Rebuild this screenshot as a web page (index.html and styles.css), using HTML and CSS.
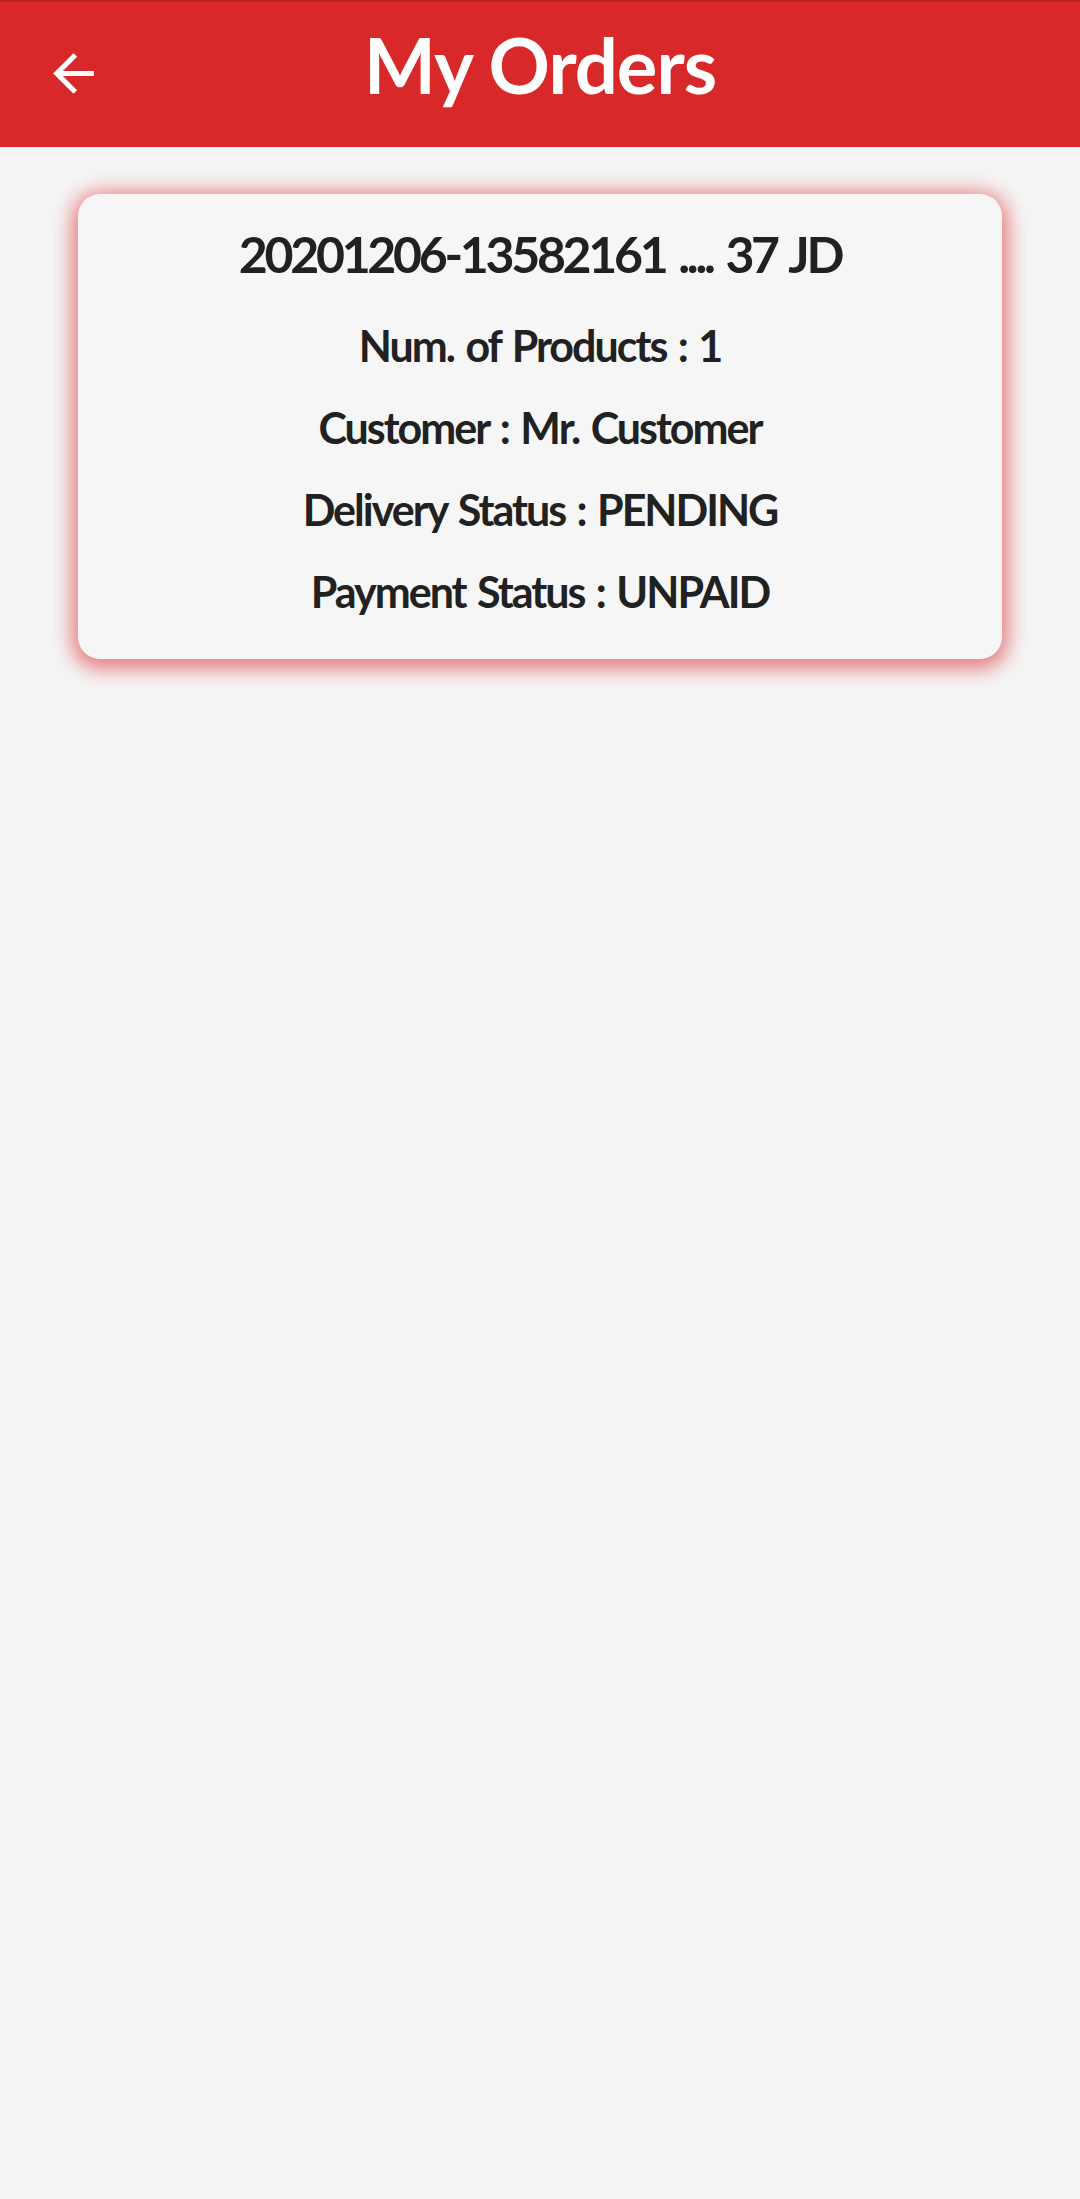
FILE: index.html
```html
<!DOCTYPE html>
<html lang="en">
<head>
    <meta charset="UTF-8">
    <meta name="viewport" content="width=device-width, initial-scale=1.0">
    <title>My Orders</title>
    <link rel="stylesheet" href="styles.css">
</head>
<body>
    <header class="toolbar">
        <button class="back-btn" aria-label="Back">
            <svg viewBox="0 0 24 24" width="61" height="61">
                <path fill="#fff" d="M20 11H7.83l5.59-5.59L12 4l-8 8 8 8 1.41-1.41L7.83 13H20v-2z"/>
            </svg>
        </button>
        <h1 class="toolbar-title">My Orders</h1>
        <div></div>
    </header>

    <main class="orders">
        <div class="order-card">
            <h2 class="order-title">20201206-13582161 .... 37 JD</h2>
            <p class="order-row">Num. of Products : 1</p>
            <p class="order-row">Customer : Mr. Customer</p>
            <p class="order-row">Delivery Status : PENDING</p>
            <p class="order-row">Payment Status : UNPAID</p>
        </div>
    </main>
</body>
</html>
```

FILE: styles.css
```css
body {
    font-family: Lato, "Open Sans", sans-serif;
    margin: 0;
    background-color: #f5f5f5;
    color: #212121;
    min-height: 2199px;
}
.toolbar {
    display: grid;
    grid-template-columns: 1fr auto 1fr;
    align-items: center;
    height: 147px;
    box-sizing: border-box;
    border-top: 2px solid #b81f21;
    background-color: #d8282a;
}
.back-btn {
    justify-self: start;
    margin-left: 43px;
    margin-top: -2px;
    padding: 0;
    border: none;
    background: none;
    display: flex;
    cursor: pointer;
}
.toolbar-title {
    margin: 0;
    padding-bottom: 20px;
    font-size: 76px;
    line-height: 90px;
    font-weight: 700;
    letter-spacing: -1px;
    color: #fff;
}
.orders {
    padding: 47px 78px;
}
.order-card {
    background-color: #f6f6f6;
    border-radius: 22px;
    padding: 30px 20px 26px;
    text-align: center;
    box-shadow: 0 4px 20px 6px rgba(220, 45, 50, 0.6);
}
.order-title {
    margin: 0 0 21px;
    font-size: 50px;
    line-height: 60px;
    font-weight: 700;
    letter-spacing: -3.3px;
    word-spacing: 4px;
}
.order-row {
    margin: 0;
    font-size: 43px;
    line-height: 82px;
    font-weight: 700;
    letter-spacing: -2px;
    word-spacing: 3px;
}
```
